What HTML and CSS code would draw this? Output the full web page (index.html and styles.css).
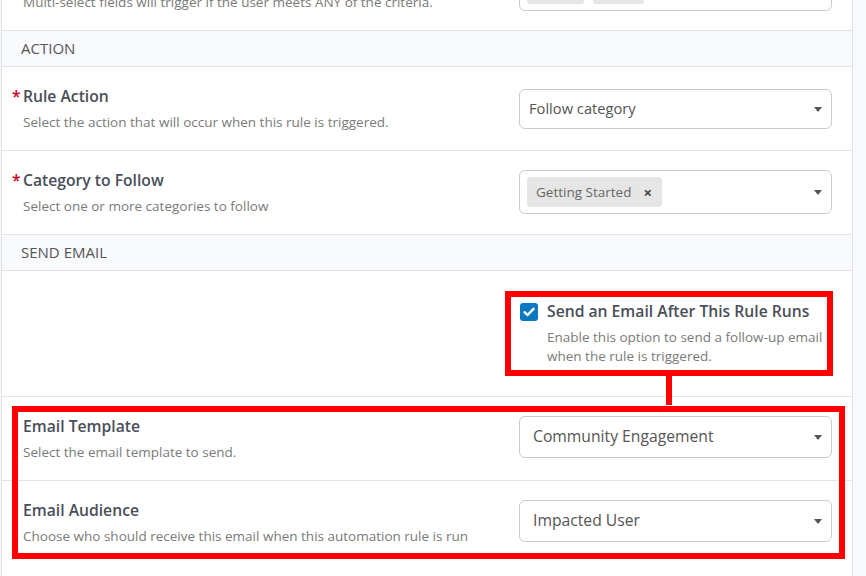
FILE: index.html
```html
<!DOCTYPE html>
<html lang="en">
<head>
  <meta charset="UTF-8">
  <title>Automation Rule</title>
  <link rel="stylesheet" href="styles.css">
</head>
<body>
  <div class="panel">
    <div class="row row-cut">
      <div class="field-text">
        <div class="label">User Criteria</div>
        <div class="desc">Multi-select fields will trigger if the user meets ANY of the criteria.</div>
      </div>
      <div class="select multi multi-top">
        <span class="tag">Members</span>
        <span class="tag">Admin</span>
        <span class="caret"></span>
      </div>
    </div>

    <div class="section">ACTION</div>

    <div class="row">
      <div class="field-text">
        <div class="label"><span class="req">*</span>Rule Action</div>
        <div class="desc">Select the action that will occur when this rule is triggered.</div>
      </div>
      <div class="select">Follow category<span class="caret"></span></div>
    </div>

    <div class="row">
      <div class="field-text">
        <div class="label"><span class="req">*</span>Category to Follow</div>
        <div class="desc">Select one or more categories to follow</div>
      </div>
      <div class="select multi">
        <span class="tag">Getting Started <b>&times;</b></span>
        <span class="caret"></span>
      </div>
    </div>

    <div class="section">SEND EMAIL</div>

    <div class="row check-row">
      <div class="check-wrap">
        <span class="checkbox">
          <svg width="12" height="10" viewBox="0 0 12 10"><path d="M1.5 5.2 L4.6 8 L10.5 1.8" fill="none" stroke="#fff" stroke-width="2.4" stroke-linecap="round" stroke-linejoin="round"/></svg>
        </span>
        <div class="check-text">
          <div class="label">Send an Email After This Rule Runs</div>
          <div class="desc">Enable this option to send a follow-up email when the rule is triggered.</div>
        </div>
        <div class="mark mark-check"></div>
      </div>
    </div>

    <div class="email-group">
      <div class="row">
        <div class="field-text">
          <div class="label">Email Template</div>
          <div class="desc">Select the email template to send.</div>
        </div>
        <div class="select big">Community Engagement<span class="caret"></span></div>
      </div>
      <div class="row last">
        <div class="field-text">
          <div class="label">Email Audience</div>
          <div class="desc">Choose who should receive this email when this automation rule is run</div>
        </div>
        <div class="select big">Impacted User<span class="caret"></span></div>
      </div>
      <div class="mark mark-group"></div>
    </div>
  </div>
</body>
</html>
```

FILE: styles.css
```css
body {
  margin: 0;
  font-family: 'Open Sans', sans-serif;
  background-color: #f8f9fc;
  overflow: hidden;
}

.panel {
  width: 852px;
  height: 700px;
  margin-left: 1px;
  box-sizing: border-box;
  background-color: #fff;
  border-left: 1px solid #dfe1e6;
  border-right: 1px solid #dfe1e6;
}

.row {
  height: 84px;
  box-sizing: border-box;
  display: flex;
  align-items: center;
  justify-content: space-between;
  padding: 0 20px 0 21px;
  border-bottom: 1px solid #e3e4e8;
}

.row.last {
  border-bottom: none;
}

.row-cut {
  margin-top: -53px;
}

.field-text {
  margin-top: -2px;
}

.label {
  font-size: 15.7px;
  font-weight: 600;
  line-height: 24px;
  color: #4a4e59;
}

.req {
  display: inline-block;
  width: 11px;
  margin-left: -11px;
  color: #d0021b;
}

.desc {
  font-size: 13.5px;
  line-height: 20px;
  margin-top: 4px;
  color: #7a7a7a;
}

.section {
  height: 36px;
  box-sizing: border-box;
  padding-left: 19px;
  padding-bottom: 2px;
  display: flex;
  align-items: center;
  font-size: 15px;
  color: #555;
  background-color: #f9fafd;
  border-bottom: 1px solid #e3e4e8;
}

.select {
  position: relative;
  width: 313px;
  height: 40px;
  box-sizing: border-box;
  border: 1px solid #c9cbd2;
  border-radius: 6px;
  padding: 0 30px 2px 9px;
  display: flex;
  align-items: center;
  font-size: 14.7px;
  color: #555;
}

.select.big {
  height: 42px;
  padding-left: 13px;
  font-size: 15.7px;
  margin-top: -4px;
}

.select.multi {
  height: 44px;
  padding-left: 7px;
  padding-bottom: 0;
  gap: 9px;
  margin-top: -2px;
}

.select.multi-top {
  margin-top: 0;
}

.caret {
  position: absolute;
  right: 9px;
  top: 50%;
  margin-top: -2px;
  border-left: 4.5px solid transparent;
  border-right: 4.5px solid transparent;
  border-top: 5px solid #555;
}

.tag {
  background-color: #e6e6e6;
  border-radius: 3px;
  height: 30px;
  padding: 0 10px 0 9px;
  display: flex;
  align-items: center;
  font-size: 13.5px;
  color: #666;
}

.tag b {
  margin-left: 12px;
  font-size: 15px;
  color: #444;
}

.multi-top .tag {
  padding: 0 2px;
  width: 53px;
  overflow: hidden;
}

.multi-top .tag + .tag {
  width: 47px;
}

.check-row {
  height: 126px;
  align-items: flex-start;
  justify-content: flex-end;
  padding-top: 28px;
}

.check-row .field-text,
.check-text {
  margin-top: 0;
}

.check-wrap {
  position: relative;
  width: 313px;
  display: flex;
  gap: 9px;
  margin-right: -1px;
}

.checkbox {
  width: 18px;
  height: 18px;
  margin-top: 4px;
  flex-shrink: 0;
  border-radius: 3px;
  background-color: #0b79c0;
  display: flex;
  align-items: center;
  justify-content: center;
}

.check-text .desc {
  margin-top: 5px;
  line-height: 19px;
}

.email-group {
  position: relative;
}

/* red annotation frames */
.mark {
  position: absolute;
  border: 6px solid #ff0000;
  pointer-events: none;
}

.mark-check {
  left: -15px;
  top: -8px;
  right: 0;
  bottom: -10px;
}

.mark-check::after {
  content: "";
  position: absolute;
  left: 50%;
  top: calc(100% + 6px);
  width: 6px;
  height: 29px;
  margin-left: -3px;
  background-color: #ff0000;
}

.mark-group {
  left: 10px;
  top: 9px;
  right: 7px;
  bottom: 6px;
}
```
